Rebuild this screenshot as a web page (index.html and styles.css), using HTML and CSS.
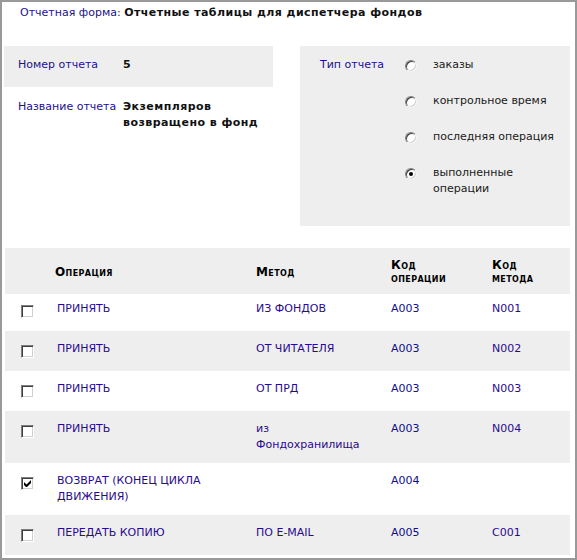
FILE: index.html
```html
<!DOCTYPE html>
<html lang="ru">
<head>
<meta charset="utf-8">
<title>Отчетная форма</title>
<link rel="stylesheet" href="styles.css">
</head>
<body>
<div class="page">
  <div class="form-title"><span class="label">Отчетная форма:</span> <b>Отчетные таблицы для диспетчера фондов</b></div>

  <div class="info">
    <div class="info-left">
      <div class="field field-gray">
        <span class="label field-label">Номер отчета</span>
        <b class="field-value">5</b>
      </div>
      <div class="field">
        <span class="label field-label">Название отчета</span>
        <b class="field-value">Экземпляров возвращено в фонд</b>
      </div>
    </div>
    <div class="info-right">
      <span class="label type-label">Тип отчета</span>
      <ul class="options">
        <li><span class="radio"></span><span class="opt-text">заказы</span></li>
        <li><span class="radio"></span><span class="opt-text">контрольное время</span></li>
        <li><span class="radio"></span><span class="opt-text">последняя операция</span></li>
        <li><span class="radio checked"></span><span class="opt-text">выполненные<br>операции</span></li>
      </ul>
    </div>
  </div>

  <table class="ops">
    <colgroup>
      <col class="c-check"><col class="c-op"><col class="c-method"><col class="c-code"><col class="c-mcode">
    </colgroup>
    <thead>
      <tr>
        <th></th>
        <th>Операция</th>
        <th>Метод</th>
        <th>Код<br><span class="sub">операции</span></th>
        <th>Код<br><span class="sub">метода</span></th>
      </tr>
    </thead>
    <tbody>
      <tr>
        <td class="chk"><span class="cb"></span></td>
        <td class="op op-name">ПРИНЯТЬ</td><td class="op">ИЗ ФОНДОВ</td><td class="code">A003</td><td class="op">N001</td>
      </tr>
      <tr class="alt">
        <td class="chk"><span class="cb"></span></td>
        <td class="op op-name">ПРИНЯТЬ</td><td class="op">ОТ ЧИТАТЕЛЯ</td><td class="code">A003</td><td class="op">N002</td>
      </tr>
      <tr>
        <td class="chk"><span class="cb"></span></td>
        <td class="op op-name">ПРИНЯТЬ</td><td class="op">ОТ ПРД</td><td class="code">A003</td><td class="op">N003</td>
      </tr>
      <tr class="alt">
        <td class="chk"><span class="cb"></span></td>
        <td class="op op-name">ПРИНЯТЬ</td><td class="op">из<br>Фондохранилища</td><td class="code">A003</td><td class="op">N004</td>
      </tr>
      <tr>
        <td class="chk"><span class="cb checked"><svg viewBox="0 0 7 7" width="7" height="7"><path d="M0 2v3l2 2h1l4-4V0L2.5 4.5z" fill="#000"/></svg></span></td>
        <td class="op op-name">ВОЗВРАТ (КОНЕЦ ЦИКЛА ДВИЖЕНИЯ)</td><td class="op"></td><td class="code">A004</td><td class="op"></td>
      </tr>
      <tr class="alt">
        <td class="chk"><span class="cb"></span></td>
        <td class="op op-name">ПЕРЕДАТЬ КОПИЮ</td><td class="op">ПО E-MAIL</td><td class="code">A005</td><td class="op">C001</td>
      </tr>
    </tbody>
  </table>
</div>
</body>
</html>
```
FILE: styles.css
```css
html, body {
  margin: 0;
  padding: 0;
  background: #fff;
}
body {
  font-family: "DejaVu Sans", Verdana, sans-serif;
  font-size: 11px;
  line-height: 16px;
  color: #111;
}
b {
  letter-spacing: 0.45px;
}
.page {
  box-sizing: border-box;
  width: 577px;
  height: 560px;
  border: 2px solid #999;
  padding: 3px 5px 0 2px;
}
.label {
  color: #22108a;
}
.form-title {
  padding-left: 16px;
}
.info {
  display: flex;
  justify-content: space-between;
  margin-top: 25px;
}
.info-left {
  width: 269px;
}
.field {
  display: flex;
  padding: 11px 14px 0;
}
.field-gray {
  background: #eeeeee;
  padding-bottom: 14px;
}
.field + .field {
  padding-top: 12px;
}
.field-label {
  flex: 0 0 105px;
}
.field-value {
  flex: 1;
}
.info-right {
  width: 270px;
  background: #eeeeee;
  display: flex;
  padding: 11px 0 29px 20px;
  box-sizing: border-box;
}
.type-label {
  flex: 0 0 85px;
}
.options {
  list-style: none;
  margin: 0;
  padding: 0;
}
.options li {
  display: flex;
  align-items: flex-start;
  margin-bottom: 20px;
}
.options li:last-child {
  margin-bottom: 0;
}
.radio {
  flex: 0 0 auto;
  box-sizing: border-box;
  width: 12px;
  height: 12px;
  margin-top: 3px;
  margin-right: 16px;
  border-radius: 50%;
  border: 1px solid;
  border-color: #808080 #f4f4f4 #f4f4f4 #808080;
  box-shadow: inset 1px 1px 0 #404040, inset -1px -1px 0 #d4d0c8;
  background: #fff;
  position: relative;
}
.radio.checked::after {
  content: "";
  position: absolute;
  left: 3px;
  top: 3px;
  width: 4px;
  height: 4px;
  border-radius: 50%;
  background: #000;
}
.opt-text {
  color: #1a1a1a;
}
.ops {
  margin-top: 22px;
  margin-left: 1px;
  width: 565px;
  border-collapse: collapse;
  table-layout: fixed;
}
.c-check { width: 50px; }
.c-op { width: 201px; }
.c-method { width: 135px; }
.c-code { width: 101px; }
.c-mcode { width: 78px; }
.ops th {
  background: #eeeeee;
  text-align: left;
  font-size: 12px;
  font-weight: bold;
  font-variant: small-caps;
  letter-spacing: 0.4px;
  color: #000;
  padding: 11px 0 9px;
  line-height: 13px;
  vertical-align: middle;
}
.ops td {
  padding: 10px 10px 10px 0;
  vertical-align: top;
}
.ops td.op-name {
  padding-left: 2px;
}
.ops tbody tr:first-child td {
  padding-top: 7px;
}
.ops tr.alt td {
  background: #eeeeee;
}
.ops td.chk {
  padding-left: 16px;
}
.op {
  color: #2a0a8c;
}
.code {
  color: #10108c;
}
.cb {
  display: block;
  box-sizing: border-box;
  width: 13px;
  height: 13px;
  margin-top: 4px;
  margin-bottom: 3px;
  border: 1px solid;
  border-color: #808080 #fff #fff #808080;
  box-shadow: inset 1px 1px 0 #404040, inset -1px -1px 0 #d4d0c8;
  background: #fff;
  position: relative;
}
.cb svg {
  position: absolute;
  left: 2px;
  top: 2px;
}
```
